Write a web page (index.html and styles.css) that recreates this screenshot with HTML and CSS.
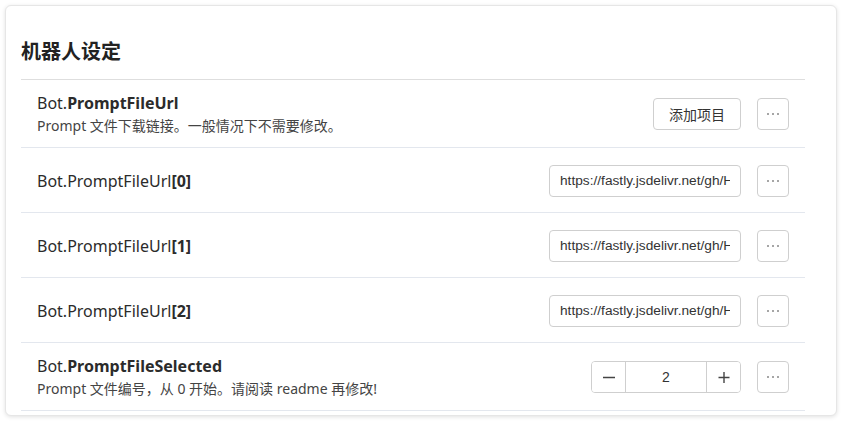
FILE: index.html
```html
<!DOCTYPE html>
<html>

<head>
    <meta http-equiv="Content-Type" content="text/html; charset=utf-8" />
    <title>机器人设定</title>
    <link rel="stylesheet" href="styles.css">
</head>

<body>
    <div class="card">
        <h2 class="card-title">机器人设定</h2>
        <div class="list">
            <div class="row">
                <div class="label">
                    <p class="name">Bot.<b>PromptFileUrl</b></p>
                    <p class="desc">Prompt 文件下载链接。一般情况下不需要修改。</p>
                </div>
                <button class="btn">添加项目</button>
                <button class="btn more"><span></span><span></span><span></span></button>
            </div>
            <div class="row">
                <div class="label">
                    <p class="name">Bot.PromptFileUrl<b>[0]</b></p>
                </div>
                <input class="text-input" type="text" value="https://fastly.jsdelivr.net/gh/HuanLinOTO/ChatGPT-Prompts@main/prompt.json">
                <button class="btn more"><span></span><span></span><span></span></button>
            </div>
            <div class="row">
                <div class="label">
                    <p class="name">Bot.PromptFileUrl<b>[1]</b></p>
                </div>
                <input class="text-input" type="text" value="https://fastly.jsdelivr.net/gh/HuanLinOTO/ChatGPT-Prompts@main/prompt-en.json">
                <button class="btn more"><span></span><span></span><span></span></button>
            </div>
            <div class="row">
                <div class="label">
                    <p class="name">Bot.PromptFileUrl<b>[2]</b></p>
                </div>
                <input class="text-input" type="text" value="https://fastly.jsdelivr.net/gh/HuanLinOTO/ChatGPT-Prompts@main/prompt-cat.json">
                <button class="btn more"><span></span><span></span><span></span></button>
            </div>
            <div class="row">
                <div class="label">
                    <p class="name">Bot.<b>PromptFileSelected</b></p>
                    <p class="desc">Prompt 文件编号，从 0 开始。请阅读 readme 再修改!</p>
                </div>
                <div class="stepper">
                    <button class="step">
                        <svg width="14" height="14" viewBox="0 0 14 14"><path d="M1 7.5h12" stroke="#444" stroke-width="1.4"/></svg>
                    </button>
                    <span class="step-value">2</span>
                    <button class="step">
                        <svg width="14" height="14" viewBox="0 0 14 14"><path d="M1.5 7.5h11M7 2v11" stroke="#444" stroke-width="1.4"/></svg>
                    </button>
                </div>
                <button class="btn more"><span></span><span></span><span></span></button>
            </div>
        </div>
    </div>
</body>

</html>
```

FILE: styles.css
```css
* {
    margin: 0;
    padding: 0;
    box-sizing: border-box;
}

body {
    padding: 5px 6px 5px 5px;
    background: #fff;
    font-family: "Noto Sans", "Noto Sans CJK SC", sans-serif;
    color: #333;
}

.card {
    background: #fff;
    border: 1px solid #e6e6e6;
    border-radius: 6px;
    box-shadow: 0 1px 4px rgba(0, 0, 0, 0.12);
    padding: 31px 31px 5px 15px;
    height: 411px;
}

.card-title {
    font-family: "Noto Sans CJK SC", sans-serif;
    font-size: 20px;
    font-weight: 700;
    line-height: 28px;
    color: #222;
    margin-bottom: 14px;
}

.list {
    border-top: 1px solid #dedede;
}

.row {
    display: flex;
    align-items: center;
    gap: 16px;
    min-height: 65px;
    padding: 12px 16px 11px;
    border-bottom: 1px solid #e3e7ee;
}

.label {
    flex: 1;
}

.name {
    font-size: 16px;
    line-height: 22px;
    color: #2b2b2b;
}

.name b {
    font-weight: 700;
}

.desc {
    margin-top: 2px;
    font-size: 14px;
    line-height: 20px;
    color: #444;
}

.btn {
    height: 32px;
    padding: 0 15px;
    border: 1px solid #cfcfcf;
    border-radius: 4px;
    background: #fff;
    font-family: "Noto Sans CJK SC", sans-serif;
    font-size: 14px;
    color: #333;
}

.more {
    width: 32px;
    padding: 0;
    display: flex;
    align-items: center;
    justify-content: center;
    gap: 3px;
}

.more span {
    width: 2px;
    height: 2px;
    border-radius: 50%;
    background: #888;
}

.text-input {
    width: 192px;
    height: 32px;
    padding: 0 10px;
    border: 1px solid #cfcfcf;
    border-radius: 4px;
    font-family: "Liberation Sans", Arial, sans-serif;
    font-size: 13.7px;
    color: #333;
    outline: none;
}

.stepper {
    display: flex;
    width: 150px;
    height: 32px;
    border: 1px solid #cfcfcf;
    border-radius: 4px;
    overflow: hidden;
}

.step {
    width: 33px;
    border: none;
    background: #fff;
    display: flex;
    align-items: center;
    justify-content: center;
}

.step-value {
    flex: 1;
    border-left: 1px solid #cfcfcf;
    border-right: 1px solid #cfcfcf;
    text-align: center;
    line-height: 30px;
    font-family: "Liberation Sans", Arial, sans-serif;
    font-size: 14px;
    color: #333;
}
```
